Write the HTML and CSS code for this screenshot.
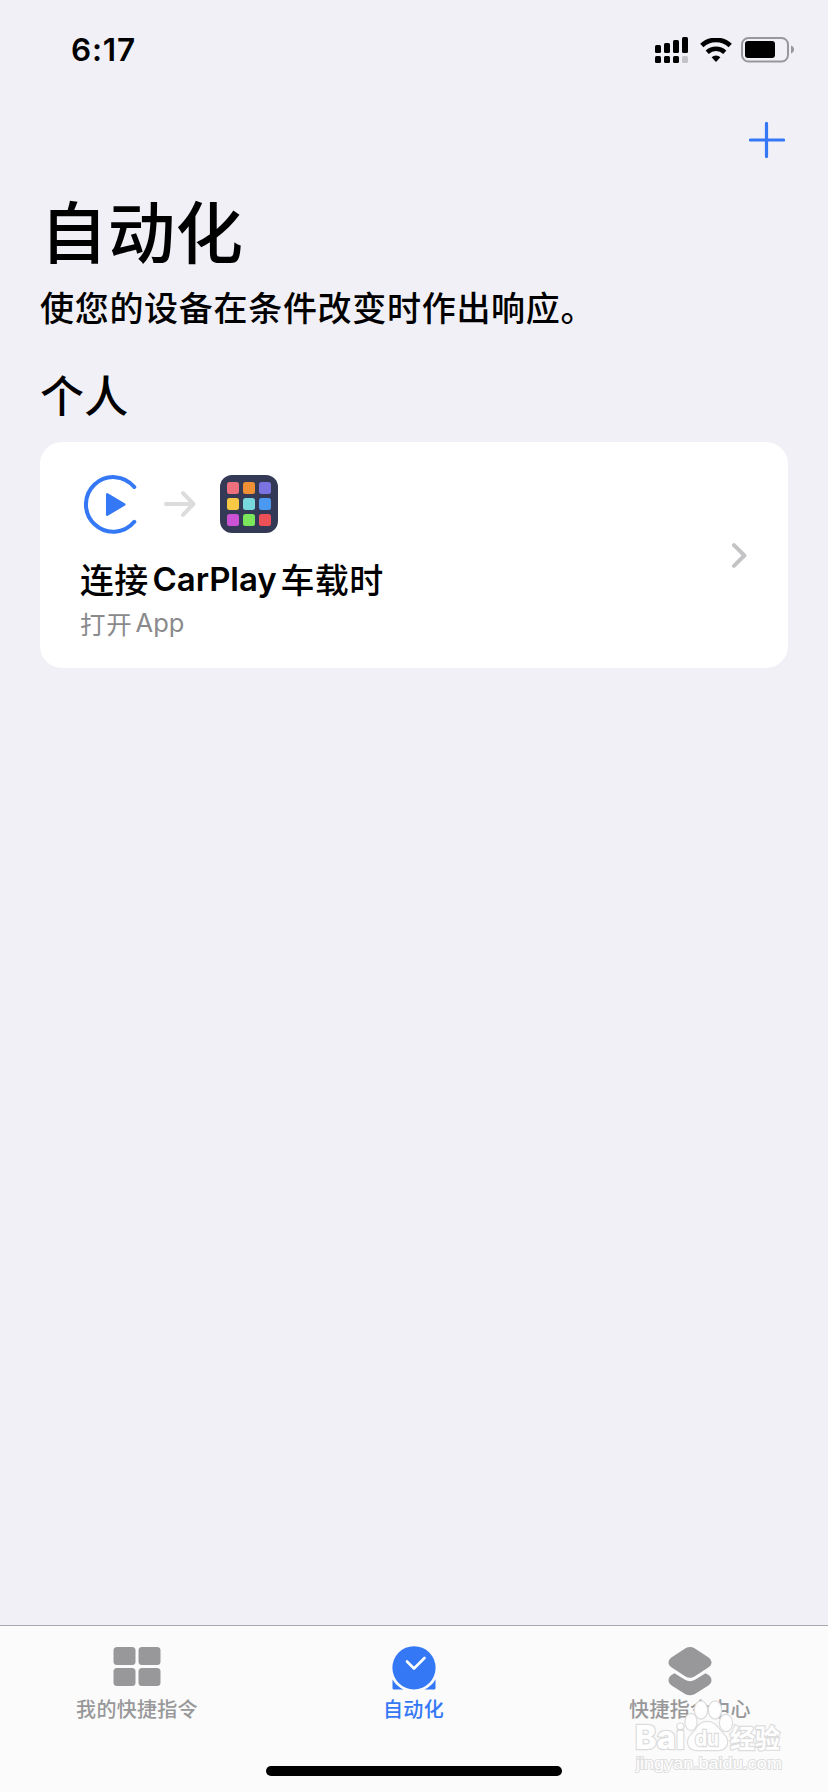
FILE: index.html
```html
<!DOCTYPE html>
<html lang="zh-CN">
<head>
<meta charset="utf-8">
<title>自动化</title>
<link rel="stylesheet" href="styles.css">
</head>
<body>
<div class="screen">
  <header class="status">
    <span class="time">6:17</span>
    <div class="indicators">
      <svg class="signal" width="33" height="26" viewBox="0 0 33 26">
        <rect x="0" y="8" width="6" height="8" rx="1.5"/><rect x="9" y="6" width="6" height="10" rx="1.5"/><rect x="18" y="3" width="6" height="13" rx="1.5"/><rect x="27" y="0" width="6" height="16" rx="1.5"/>
        <rect x="0" y="19" width="6" height="7" rx="1.5"/><rect x="9" y="19" width="6" height="7" rx="1.5"/><rect x="18" y="19" width="6" height="7" rx="1.5"/><rect x="27" y="19" width="6" height="7" rx="1.5" fill="#c3c2c7"/>
      </svg>
      <svg class="wifi" width="32" height="24" viewBox="0 0 32 24">
        <path d="M1.800 7.600a20.600 20.600 0 0 1 28.400 0" fill="none" stroke="#000" stroke-width="4.800"/>
        <path d="M7.200 14.200a13 13 0 0 1 17.600 0" fill="none" stroke="#000" stroke-width="4.600"/>
        <path d="M11.600 19.200a6.800 6.800 0 0 1 8.800 0L16 24z"/>
      </svg>
      <svg class="battery" width="53" height="26" viewBox="0 0 53 26">
        <rect x="1" y="1" width="46" height="23.5" rx="6.5" fill="none" stroke="#98979c" stroke-width="2"/>
        <rect x="4" y="4" width="30" height="17" rx="3"/>
        <path d="M50 8.5q3 1.2 3 4t-3 4z" fill="#98979c"/>
      </svg>
    </div>
  </header>
  <nav class="toolbar">
    <svg width="36" height="36" viewBox="0 0 36 36"><path d="M17.5 1.5v33M1.5 18h33" fill="none" stroke="#3478f6" stroke-width="3.2" stroke-linecap="round"/></svg>
  </nav>
  <main class="content">
    <h1 class="title">自动化</h1>
    <p class="subtitle">使您的设备在条件改变时作出响应。</p>
    <h2 class="section">个人</h2>
    <article class="card">
      <div class="card-body">
        <div class="flow-icons">
          <svg width="54" height="60" viewBox="0 0 54 60">
            <path d="M50.3 13A27.3 27.3 0 1 0 50.3 47.800" fill="none" stroke="#3478f6" stroke-width="4" stroke-linecap="round"/>
            <path d="M23.200 20.300v20.400L40.400 30.500z" fill="#3478f6" stroke="#3478f6" stroke-width="2.4" stroke-linejoin="round"/>
          </svg>
          <svg class="arrow" width="32" height="26" viewBox="0 0 32 26"><path d="M2 13h27.5M19 2.2L29.5 13 19 23.8" fill="none" stroke="#dcdcdc" stroke-width="4" stroke-linecap="round" stroke-linejoin="round"/></svg>
          <svg class="app" width="58" height="58" viewBox="0 0 58 58">
            <rect width="58" height="58" rx="12" fill="#343a56"/>
            <g><rect x="7" y="7" width="12" height="12" rx="2.5" fill="#ed707c"/><rect x="23" y="7" width="12" height="12" rx="2.5" fill="#ef9035"/><rect x="39" y="7" width="12" height="12" rx="2.5" fill="#7a73e0"/>
            <rect x="7" y="23" width="12" height="12" rx="2.5" fill="#f7c845"/><rect x="23" y="23" width="12" height="12" rx="2.5" fill="#79d7de"/><rect x="39" y="23" width="12" height="12" rx="2.5" fill="#4a98f0"/>
            <rect x="7" y="39" width="12" height="12" rx="2.5" fill="#cb52d5"/><rect x="23" y="39" width="12" height="12" rx="2.5" fill="#7be65c"/><rect x="39" y="39" width="12" height="12" rx="2.5" fill="#ed5157"/></g>
          </svg>
        </div>
        <div class="card-title"><span>连接</span><span class="latin">CarPlay</span><span>车载时</span></div>
        <div class="card-sub"><span>打开</span><span class="latin">App</span></div>
      </div>
      <svg class="chevron" width="15" height="25" viewBox="0 0 15 25"><path d="M2 2.2L12.4 12.5 2 22.8" fill="none" stroke="#c4c4c6" stroke-width="4" stroke-linecap="round" stroke-linejoin="round"/></svg>
    </article>
  </main>
  <footer class="tabs">
    <div class="tab">
      <svg width="48" height="50" viewBox="0 0 48 50" fill="#98989a"><rect x=".5" y="1" width="22" height="18" rx="3.5"/><rect x="25.5" y="1" width="22" height="18" rx="3.5"/><rect x=".5" y="22" width="22" height="18" rx="3.5"/><rect x="25.5" y="22" width="22" height="18" rx="3.5"/></svg>
      <span class="label">我的快捷指令</span>
    </div>
    <div class="tab active">
      <svg width="44" height="50" viewBox="0 0 44 50"><path d="M.5 33.5A25 25 0 0 0 11.500 43.500H2Q.5 43.500 .5 42zM43.500 33.500A25 25 0 0 1 32.500 43.500H42Q43.500 43.500 43.500 42z" fill="#3478f6"/><circle cx="22" cy="21.8" r="21.6" fill="#3478f6"/><path d="M15 15.5l7 7L32.5 12" fill="none" stroke="#fff" stroke-width="2.6" stroke-linecap="round" stroke-linejoin="round"/></svg>
      <span class="label">自动化</span>
    </div>
    <div class="tab last">
      <svg width="44" height="50" viewBox="0 0 44 50" fill="#98989a"><path d="M17.5 2.300Q22 -.2 26.500 2.300L39.500 10.800Q43.500 13.500 43.500 16.500T39.500 22L26.500 30.500Q22 33 17.500 30.500L4.500 22Q.5 19.500 .5 16.500T4.500 10.800z"/><path d="M6.500 27.300L17 33.700Q22 36.600 27 33.700L37.500 27.300Q43.500 30 43.500 34.200Q43.500 37.500 40 39.700L26.500 48.200Q22 50.500 17.500 48.200L4 39.700Q.5 37.500 .5 34.200Q.5 30 6.500 27.300z"/></svg>
      <span class="label">快捷指令中心</span>
    </div>
    <svg class="watermark" width="156" height="82" viewBox="0 0 156 82">
      <g class="wm-shapes">
        <ellipse cx="56" cy="30" rx="5.500" ry="8"/><ellipse cx="66" cy="18" rx="6" ry="8.500"/><ellipse cx="80" cy="18" rx="6" ry="8.500"/><ellipse cx="91" cy="31" rx="6" ry="8"/>
        <path d="M72 30C63 30 62 38 57 42C50 49 53 58 62 58H83C92 58 95 49 89 43C84 38 81 30 72 30z"/>
        <text class="wm-baidu" x="0" y="57" textLength="50" lengthAdjust="spacingAndGlyphs">Bai</text>
        <text class="wm-du" x="60" y="54" textLength="24" lengthAdjust="spacingAndGlyphs">du</text>
        <text class="wm-cn" x="95" y="56" textLength="50" lengthAdjust="spacingAndGlyphs">经验</text>
        <text class="wm-url" x="1" y="77" textLength="146" lengthAdjust="spacingAndGlyphs">jingyan.baidu.com</text>
      </g>
    </svg>
    <div class="home"></div>
  </footer>
</div>
</body>
</html>
```
FILE: styles.css
```css
* { box-sizing: border-box; }
body { margin: 0; background: #f1f0f6; }
.screen {
  width: 828px; height: 1792px; display: flex; flex-direction: column;
  background: #f1f0f6; color: #000; overflow: hidden; white-space: nowrap;
  font-family: Inter, "Noto Sans CJK SC", sans-serif;
}
svg { display: block; flex: none; }
.status { height: 100px; padding: 0 34px 0 71px; display: flex; justify-content: space-between; align-items: center; }
.time { font-size: 31.5px; font-weight: 600; line-height: 40px; letter-spacing: .8px; }
.indicators { display: flex; align-items: center; }
.wifi { margin-left: 12px; }
.battery { margin-left: 9px; }
.toolbar { height: 80px; padding: 22px 43px 0 0; display: flex; justify-content: flex-end; }
.content { padding: 0 40px; flex: 1; }
h1, h2, p { margin: 0; font-family: "Noto Sans CJK SC", sans-serif; }
.title { height: 100px; font-size: 67.5px; line-height: 98px; font-weight: 500; letter-spacing: .2px; }
.subtitle { font-size: 34px; line-height: 48px; padding-top: 3px; font-weight: 500; letter-spacing: .7px; }
.section { padding-top: 33px; height: 111px; font-size: 44px; line-height: 60px; font-weight: 500; letter-spacing: .2px; }
.card { height: 226px; border-radius: 22px; background: #fff; padding: 32px 41px 0 40px; display: flex; justify-content: space-between; }
.flow-icons { display: flex; align-items: center; height: 60px; padding-left: 4px; }
.arrow { margin-left: 26px; }
.app { margin-left: 24px; }
.card-title { display: flex; align-items: center; margin-top: 20px; height: 48px; font-size: 34px; font-weight: 500; letter-spacing: .3px; }
.card-title .latin { font-weight: 600; letter-spacing: -.1px; margin: 1px 4px 0 4px; font-size: 33px; }
.card-sub { display: flex; align-items: center; height: 40px; font-size: 25.5px; color: #8a8a8d; letter-spacing: .8px; }
.card-sub .latin { margin-left: 3px; margin-top: 1px; letter-spacing: 0; }
.chevron { margin-top: 69px; }
.tabs { position: relative; height: 167px; border-top: 1px solid #a9a8ae; background: #fbfbfb; display: flex; justify-content: space-between; padding: 20px 76px 0 75px; color: #98989a; }
.tab { width: 124px; display: flex; flex-direction: column; align-items: center; }
.tab .label { font-family: "Noto Sans CJK SC", sans-serif; font-size: 20px; line-height: 28px; margin-top: -1px; letter-spacing: .3px; font-weight: 500; }
.active { color: #3478f6; }
.home { position: absolute; left: 266px; bottom: 16px; width: 296px; height: 10px; border-radius: 5px; background: #000; }
.watermark { position: absolute; left: 635px; top: 66px; }
.wm-shapes { fill: #fefefe; stroke: #dcdcdc; stroke-width: 2.4px; paint-order: stroke; }
.wm-baidu { font: 800 33px Inter, sans-serif; }
.wm-du { font: 700 22px Inter, sans-serif; }
.wm-cn { font: 700 26px "Noto Sans CJK SC", sans-serif; }
.wm-url { font: 400 17px "Liberation Sans", sans-serif; stroke: #dfdfdf; stroke-width: 2px; }
```
